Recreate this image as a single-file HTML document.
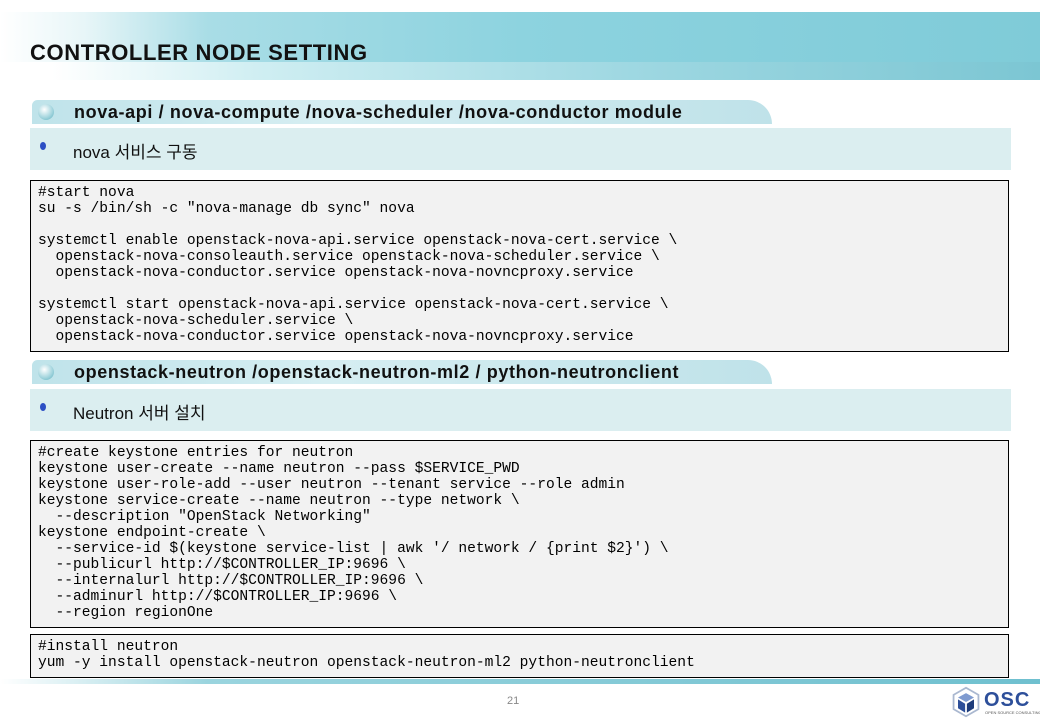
<!DOCTYPE html>
<html><head><meta charset="utf-8"><style>
body{margin:0;width:1040px;height:720px;background:#fff;position:relative;overflow:hidden;font-family:"Liberation Sans","Noto Sans CJK KR",sans-serif}
.band{position:absolute;left:0;top:12px;width:1040px;height:68px;background:linear-gradient(90deg,#fff 0%,#e8f6f8 8%,#a9dde6 20%,#8dd3df 50%,#7fcbd8 100%)}
.band2{position:absolute;left:0;top:62px;width:1040px;height:18px;background:linear-gradient(90deg,#fff 5%,#cfeef2 25%,#9fd8e2 60%,#7cc6d3 100%)}
.title{position:absolute;left:30px;top:40px;font-weight:bold;font-size:22px;color:#111;letter-spacing:0.6px}
.pill{position:absolute;left:32px;width:740px;height:24px;background:linear-gradient(90deg,#bfe3ea,#d6eef2 40%,#bfe2e9);border-radius:14px 60px 0 0}
.pill b{position:absolute;left:42px;top:2px;font-size:18px;color:#111;letter-spacing:0.62px;white-space:nowrap}
.dot{position:absolute;left:6px;top:4px;width:16px;height:16px;border-radius:50%;background:radial-gradient(circle at 40% 35%,#fff,#9fd3dc 60%,#5aaebc)}
.sub{position:absolute;left:30px;width:981px;height:42px;background:#dbeef0}
.sub span{position:absolute;left:43px;top:10px;font-size:17px;color:#111}
.sub i{position:absolute;left:10px;top:14px;width:6px;height:8px;border-radius:50%;background:#2c4fc4}
.code{position:absolute;left:30px;width:979px;background:#f2f2f2;border:1px solid #000;margin:0;padding:4px 0 0 7px;box-sizing:border-box;font-family:"Liberation Mono",monospace;font-size:14.6px;line-height:16px;color:#000;white-space:pre}
.foot{position:absolute;left:0;top:679px;width:1040px;height:5px;background:linear-gradient(90deg,#fff,#9ad4de 20%,#6fc0cf)}
</style></head><body>
<div class="band"></div><div class="band2"></div>
<div class="title">CONTROLLER NODE SETTING</div>
<div class="pill" style="top:100px"><div class="dot"></div><b>nova-api / nova-compute /nova-scheduler /nova-conductor module</b></div>
<div class="sub" style="top:128px"><i></i><span>nova 서비스 구동</span></div>
<pre class="code" style="top:180px;height:172px">#start nova
su -s /bin/sh -c "nova-manage db sync" nova

systemctl enable openstack-nova-api.service openstack-nova-cert.service \
  openstack-nova-consoleauth.service openstack-nova-scheduler.service \
  openstack-nova-conductor.service openstack-nova-novncproxy.service

systemctl start openstack-nova-api.service openstack-nova-cert.service \
  openstack-nova-scheduler.service \
  openstack-nova-conductor.service openstack-nova-novncproxy.service</pre>
<div class="pill" style="top:360px"><div class="dot"></div><b>openstack-neutron /openstack-neutron-ml2 / python-neutronclient</b></div>
<div class="sub" style="top:389px"><i></i><span>Neutron 서버 설치</span></div>
<pre class="code" style="top:440px;height:188px">#create keystone entries for neutron
keystone user-create --name neutron --pass $SERVICE_PWD
keystone user-role-add --user neutron --tenant service --role admin
keystone service-create --name neutron --type network \
  --description "OpenStack Networking"
keystone endpoint-create \
  --service-id $(keystone service-list | awk '/ network / {print $2}') \
  --publicurl http://$CONTROLLER_IP:9696 \
  --internalurl http://$CONTROLLER_IP:9696 \
  --adminurl http://$CONTROLLER_IP:9696 \
  --region regionOne</pre>
<pre class="code" style="top:634px;height:44px">#install neutron
yum -y install openstack-neutron openstack-neutron-ml2 python-neutronclient</pre>
<div class="foot"></div>
<div style="position:absolute;left:507px;top:695px;font-size:11px;color:#888">21</div>
<svg style="position:absolute;left:950px;top:686px" width="32" height="32" viewBox="0 0 36 36"><polygon points="18,2 32,10 32,26 18,34 4,26 4,10" fill="#fff" stroke="#aab8d0" stroke-width="2"/><polygon points="18,8 27,13 18,18 9,13" fill="#7f9bd0"/><polygon points="9,15 17,20 17,30 9,25" fill="#2d4f9a"/><polygon points="19,20 27,15 27,25 19,30" fill="#1d3b7a"/></svg>
<div style="position:absolute;left:984px;top:689px;font-size:20px;font-weight:bold;color:#2d4f9a;letter-spacing:1px">OSC</div>
<div style="position:absolute;left:985px;top:710px;font-size:4px;color:#555;white-space:nowrap">OPEN SOURCE CONSULTING</div>
</body></html>
